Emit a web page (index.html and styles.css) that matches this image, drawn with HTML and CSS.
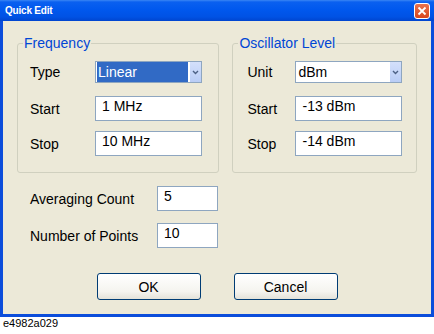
FILE: index.html
```html
<!DOCTYPE html>
<html lang="en">
<head>
    <meta charset="UTF-8">
    <meta name="viewport" content="width=device-width, initial-scale=1.0">
    <title>Quick Edit</title>
    <link rel="stylesheet" href="styles.css">
</head>
<body>
    <div class="window">
        <div class="titlebar">
            <span class="title">Quick Edit</span>
            <span class="close">
                <svg width="10" height="10" viewBox="0 0 10 10"><path d="M1.5 1.5 L8.5 8.5 M8.5 1.5 L1.5 8.5" stroke="#fff" stroke-width="1.8" fill="none"/></svg>
            </span>
        </div>
        <div class="frame">
            <div class="groups">
                <fieldset class="group group-freq">
                    <legend>Frequency</legend>
                    <div class="group-body">
                        <div class="row row-combo">
                            <span class="lbl">Type</span>
                            <div class="combo combo-sel">
                                <span class="combo-text">Linear</span>
                                <span class="combo-btn"><svg width="7" height="5" viewBox="0 0 7 5"><path d="M1 1 L3.5 3.5 L6 1" stroke="#4d6185" stroke-width="1.4" fill="none"/></svg></span>
                            </div>
                        </div>
                        <div class="row">
                            <span class="lbl">Start</span>
                            <div class="edit">1 MHz</div>
                        </div>
                        <div class="row">
                            <span class="lbl">Stop</span>
                            <div class="edit">10 MHz</div>
                        </div>
                    </div>
                </fieldset>
                <fieldset class="group group-osc">
                    <legend>Oscillator Level</legend>
                    <div class="group-body">
                        <div class="row row-combo">
                            <span class="lbl">Unit</span>
                            <div class="combo">
                                <span class="combo-text">dBm</span>
                                <span class="combo-btn"><svg width="7" height="5" viewBox="0 0 7 5"><path d="M1 1 L3.5 3.5 L6 1" stroke="#4d6185" stroke-width="1.4" fill="none"/></svg></span>
                            </div>
                        </div>
                        <div class="row">
                            <span class="lbl">Start</span>
                            <div class="edit">-13 dBm</div>
                        </div>
                        <div class="row">
                            <span class="lbl">Stop</span>
                            <div class="edit">-14 dBm</div>
                        </div>
                    </div>
                </fieldset>
            </div>
            <div class="extra">
                <div class="row">
                    <span class="lbl">Averaging Count</span>
                    <div class="edit edit-short">5</div>
                </div>
                <div class="row">
                    <span class="lbl">Number of Points</span>
                    <div class="edit edit-short">10</div>
                </div>
            </div>
            <div class="buttons">
                <button class="btn">OK</button>
                <button class="btn">Cancel</button>
            </div>
        </div>
    </div>
    <div class="caption">e4982a029</div>
</body>
</html>
```

FILE: styles.css
```css
body { margin: 0; background: #fff; font-family: "Liberation Sans", Arial, sans-serif; font-size: 14px; color: #000; }
.window { width: 434px; }
.titlebar { height: 21px; box-sizing: border-box; display: flex; align-items: center; justify-content: space-between; padding: 0 4px 0 5px; background: linear-gradient(#3a86f4 0, #0a60f0 2px, #0058ee 45%, #0052e4 80%, #0045cf 100%); }
.title { color: #fff; font-weight: bold; font-size: 10px; letter-spacing: -0.2px; }
.close { width: 16px; height: 16px; box-sizing: border-box; border: 1px solid #fff; border-radius: 3px; background: linear-gradient(#e8724e, #d9461c); display: flex; align-items: center; justify-content: center; }
.close svg { display: block; }
.frame { height: 296px; box-sizing: border-box; border: 3px solid #0b4ddb; border-top: 0; background: #ece9d8; padding: 14px 14px 14px 14px; }
.groups { display: flex; gap: 13px; }
.group { margin: 0; padding: 0; border: 1px solid #d0d0bf; border-radius: 3px; box-sizing: border-box; min-width: 0; }
.group-freq { width: 203px; }
.group-osc { width: 185px; }
.group legend { margin-left: 5px; padding: 0 1px; color: #0046d5; font-size: 14px; line-height: 16px; }
.group-body { padding: 10px 0 16px 12px; }
.group-osc .group-body { padding-left: 14px; }
.row { display: flex; align-items: center; height: 25px; }
.row + .row { margin-top: 12px; }
.group .row + .row { margin-top: 10px; }
.group .row-combo { height: 22px; }
.group .row-combo + .row { margin-top: 13px; }
.lbl { display: block; }
.group-freq .lbl { width: 65px; }
.group-osc .lbl { width: 48px; }
.edit { width: 107px; height: 25px; box-sizing: border-box; border: 1px solid #8ea6c0; background: #fff; padding: 1px 6px; line-height: 16px; white-space: nowrap; }
.combo { width: 107px; height: 22px; box-sizing: border-box; border: 1px solid #8ea6c0; background: #fff; display: flex; padding: 0 0 0 1px; }
.combo-text { flex: 1; margin-right: 2px; padding-left: 1px; line-height: 20px; }
.combo-sel .combo-text { background: #316ac5; color: #fff; }
.combo-btn { width: 11px; display: flex; align-items: center; justify-content: center; background: linear-gradient(#d4e0fb, #b9cdf6); }
.combo-btn svg { display: block; }
.extra { margin-top: 13px; padding-left: 13px; }
.extra .lbl { width: 127px; }
.edit-short { width: 61px; }
.buttons { display: flex; justify-content: center; gap: 33px; margin-top: 25px; }
.btn { width: 104px; height: 27px; box-sizing: border-box; border: 1px solid #003c74; border-radius: 3px; background: linear-gradient(#ffffff, #f5f4ef 70%, #e4e2d9); font-family: "Liberation Sans", Arial, sans-serif; font-size: 14px; color: #000; padding: 0; }
.caption { font-size: 11px; line-height: 13px; padding-left: 3px; }
```
